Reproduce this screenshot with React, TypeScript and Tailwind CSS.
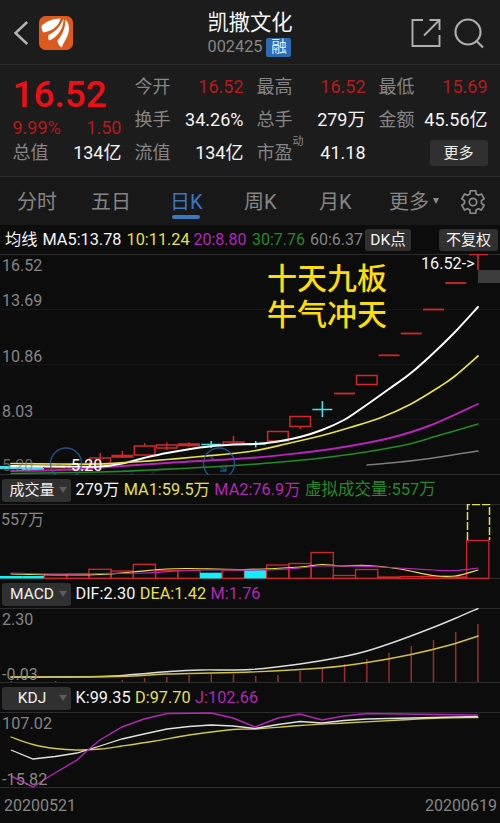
import * as React from "react";

const STEP = 22.22;
const cx = (i: number) => 11.3 + STEP * i;

const RED = "#d3262b";
const CYAN = "#3fe3e8";
const YELLOW = "#e6e04c";
const MAGENTA = "#b526b8";
const GREEN = "#238a26";

type Point = [number, number];

// Catmull-Rom smoothing so the averages bend the way the chart draws them
const smooth = (pts: Point[]) => {
  let d = `M${pts[0][0]} ${pts[0][1]}`;
  for (let i = 0; i < pts.length - 1; i++) {
    const a = pts[i - 1] || pts[i];
    const b = pts[i];
    const c = pts[i + 1];
    const e = pts[i + 2] || c;
    d += ` C${b[0] + (c[0] - a[0]) / 6} ${b[1] + (c[1] - a[1]) / 6} ${c[0] - (e[0] - b[0]) / 6} ${c[1] - (e[1] - b[1]) / 6} ${c[0]} ${c[1]}`;
  }
  return d;
};

const polar = (r: number, deg: number) => {
  const t = (deg * Math.PI) / 180;
  return `${(13 + r * Math.cos(t)).toFixed(2)} ${(13 + r * Math.sin(t)).toFixed(2)}`;
};

// six teeth, one of them pointing straight up
const gear = `M${[0, 1, 2, 3, 4, 5]
  .map((k) => {
    const a = k * 60 - 90;
    return [polar(8.6, a - 21), polar(11.6, a - 14), polar(11.6, a + 14), polar(8.6, a + 21)].join(" ");
  })
  .join(" ")}Z`;

const Curve: React.FC<{ pts: Point[]; color: string; width?: number }> = ({ pts, color, width = 1.6 }) => (
  <path d={smooth(pts)} fill="none" stroke={color} strokeWidth={width} strokeLinecap="round" />
);

// index, body top, body bottom, wick top, wick bottom
const candles: [number, number, number, number, number][] = [
  [4, 458, 463.5, 453, 463],
  [5, 455.5, 457, 451, 458],
  [6, 446, 455, 443, 446],
  [7, 445, 448, 442.5, 450],
  [8, 444, 445.5, 442, 447],
  [10, 442, 444.5, 436, 442],
  [12, 431.5, 441, 441, 441],
  [13, 416.5, 426.5, 426, 429],
  [15, 393.5, 393.5, 393, 393],
  [16, 375.5, 384.5, 384, 384],
  [17, 355.3, 355.3, 355, 355],
  [18, 333.5, 333.5, 333, 333],
  [19, 309.5, 309.5, 309, 309],
  [20, 283, 283, 283, 283],
];

const crosses: [number, number, number, number][] = [
  [9, 444.5, 441, 448],
  [11, 444, 441, 447.5],
  [14, 409.5, 401, 417],
];

const volumes = [576, 576, 574.5, 574, 569.3, 571, 564.3, 570.5, 570.5, 572.7, 570, 570, 565, 563.5, 552.5, 575.5, 569.5, 577, 576.5, 576.5, 577, 540.5];
const fallingDays = [0, 1, 9, 11];

const macdBars = [681, 682, 681, 682, 682, 680, 678, 677, 675, 674, 674, 676, 675, 671, 668.5, 664, 659, 653, 646, 640, 632, 624];

const quotes = [
  { label: "今开", value: "16.52", up: true },
  { label: "最高", value: "16.52", up: true },
  { label: "最低", value: "15.69", up: true },
  { label: "换手", value: "34.26%" },
  { label: "总手", value: "279万" },
  { label: "金额", value: "45.56亿" },
];

const Quote: React.FC<{ label: string; value: string; up?: boolean }> = ({ label, value, up }) => (
  <div className="flex items-center justify-between">
    <span className="text-[#858585]">{label}</span>
    <span className={up ? "text-[#b81a1d]" : "text-[#f4f4f4]"}>{value}</span>
  </div>
);

const Picker: React.FC<{ children: React.ReactNode }> = ({ children }) => (
  <div className="flex h-[23px] w-[69px] shrink-0 items-center rounded-[3px] bg-[#303030] text-[#f0f0f0]">
    <span className="flex-1 pl-[3px] text-center">{children}</span>
    <span className="mr-[4px] h-0 w-0 border-x-[4px] border-t-[6px] border-x-transparent border-t-[#5c5c5c]" />
  </div>
);

const Header: React.FC = () => (
  <header className="flex h-[65px] items-center border-b border-[#2d2d2d] pl-[13px] pr-[15px]">
    <svg width="17" height="26" viewBox="0 0 17 26" className="mt-[1px]">
      <path d="M14.2 2 2.5 13 14.2 24" fill="none" stroke="#b4b4b4" strokeWidth="2.5" />
    </svg>
    <svg width="34" height="34" viewBox="0 0 34 34" className="ml-[9px] mt-[2px]">
      <rect width="34" height="34" rx="6.5" fill="#dc5a1d" />
      <path d="M21.5 2.5C14 2.5 6 6 2.5 10C2.5 13 3 15 4.5 16.5C10 15.5 15 13 18 9.500C20 7 21 5 21.5 2.5Z" fill="#fff" />
      <path d="M24.5 2.5C22 10 16 16 9.5 19C9 21 9.3 23 10 24.5C15 23 20 18 22.5 12.5C24 9 24.7 6 24.5 2.5Z" fill="#fff" />
      <path d="M26.5 3.5C26.5 12 23 20 18.5 24.5C18.5 27 20 30 23 31.5C23.5 28 27 24 28.8 19C31 13 30 7 26.5 3.5Z" fill="#fff" />
    </svg>
    <div className="flex flex-1 flex-col items-center">
      <div className="ml-[16px] mt-[1px] text-[21.3px] leading-[29px] text-[#f6f6f6]">凯撒文化</div>
      <div className="ml-[15px] flex items-center gap-[4px] text-[16.3px] leading-[20px] text-[#858585]">
        002425
        <span className="h-[19px] w-[25px] rounded-[2px] bg-[#2d6cb5] text-center text-[15.5px] leading-[19px] text-[#e4eefa]">融</span>
      </div>
    </div>
    <svg width="30" height="30" viewBox="0 0 30 30" fill="none" stroke="#b0b0b0" strokeWidth="1.9" className="mt-[2px]">
      <path d="M12 2H1.5V28H28.5V17M18.5 2H28.5V12M28.5 2 13 17.5" />
    </svg>
    <svg width="31" height="31" viewBox="0 0 31 31" fill="none" stroke="#b0b0b0" strokeWidth="2.1" className="ml-[13px] mt-[3px]">
      <circle cx="14" cy="14" r="12.5" />
      <path d="m22.500 23 6.500 6.500" />
    </svg>
  </header>
);

const Summary: React.FC = () => (
  <section className="grid h-[112px] grid-cols-4 gap-x-[13px] border-b border-[#2d2d2d] px-[12.5px] pt-[5px] text-[18px]">
    <div className="flex flex-col">
      <div className="h-[49px] text-[37px] font-medium leading-[50px] text-[#ee0f16]">16.52</div>
      <div className="flex h-[17px] items-center justify-between text-[#b81a1d]">
        <span>9.99%</span>
        <span>1.50</span>
      </div>
      <div className="flex h-[33px] items-center justify-between">
        <span className="text-[#858585]">总值</span>
        <span className="text-[#f4f4f4]">134亿</span>
      </div>
    </div>
    <div className="col-span-3 grid h-[99px] grid-cols-3 grid-rows-3 gap-x-[13px]">
      {quotes.map((q) => (
        <Quote key={q.label} {...q} />
      ))}
      <Quote label="流值" value="134亿" />
      <div className="flex items-center justify-between">
        <span className="relative text-[#858585]">
          市盈
          <span className="absolute left-[36px] top-[-9px] text-[11px] leading-[24px]">动</span>
        </span>
        <span className="text-[#f4f4f4]">41.18</span>
      </div>
      <div className="flex items-center justify-end">
        <div className="h-[26px] w-[58px] rounded-[3px] bg-[#303030] text-center text-[15px] leading-[26px] text-[#ededed]">更多</div>
      </div>
    </div>
  </section>
);

const Tabs: React.FC = () => (
  <nav className="flex h-[48px] items-center bg-[#181818] pl-[17px] pt-[1px] text-[20px] text-[#858585]">
    <span className="w-[74px]">分时</span>
    <span className="w-[79px]">五日</span>
    <span className="relative w-[74px] text-[#3d77c2]">
      日K
      <span className="absolute bottom-[-2px] left-[2px] h-[4px] w-[28px] rounded-full bg-[#3d77c2]" />
    </span>
    <span className="w-[75px]">周K</span>
    <span className="w-[70px]">月K</span>
    <span>更多</span>
    <span className="mb-[2px] ml-[4px] h-0 w-0 border-x-[3.5px] border-t-[6px] border-x-transparent border-t-[#8a8a8a]" />
    <svg width="26" height="26" viewBox="0 0 26 26" fill="none" stroke="#8b8b8b" strokeWidth="1.700" strokeLinejoin="round" className="ml-[21px]">
      <path d={gear} />
      <circle cx="13" cy="13" r="3.700" />
    </svg>
  </nav>
);

const Grid: React.FC<{ ys: number[]; color?: string }> = ({ ys, color = "#2c2c2c" }) => (
  <>
    {ys.map((y) => (
      <path key={y} d={`M0 ${y}H500`} stroke={color} />
    ))}
  </>
);

const PriceChart: React.FC = () => (
  <div className="relative h-[221px] text-[16px] leading-[18px] text-[#858585]">
    <svg width="500" height="221" viewBox="0 254 500 221" className="block">
      <Grid ys={[254.5, 474.5]} />
      <Grid ys={[309.5, 364.5, 419.5]} color="#171717" />
      <path d="M0 467.5H43M22 469.5H44" stroke={CYAN} strokeWidth="3" />
      <path d="M44 467.5H66M67 469.5H88" stroke={RED} strokeWidth="2" />
      {candles.map(([i, top, bottom, high, low]) => (
        <g key={i} stroke={RED} strokeWidth="1.5" fill="none">
          {bottom - top < 1 ? (
            <path d={`M${cx(i) - 10.5} ${top}h21`} strokeWidth="1.8" />
          ) : (
            <rect x={cx(i) - 10.3} y={top} width="20.6" height={bottom - top} />
          )}
          {low > high && <path d={`M${cx(i)} ${high}V${low}`} />}
        </g>
      ))}
      {crosses.map(([i, y, high, low]) => (
        <path key={i} d={`M${cx(i) - 10} ${y}h20M${cx(i)} ${high}V${low}`} stroke={CYAN} strokeWidth="1.6" />
      ))}
      <path d="M469 254.5H488M478 254V270" stroke={RED} strokeWidth="1.6" />
      <rect x="478" y="270" width="22" height="13" fill="#3c3c3c" />
      <Curve pts={[[11, 473.5], [100, 472], [150, 470], [250, 464.5], [330, 457], [400, 446], [440, 435], [478, 424]]} color={GREEN} />
      <Curve pts={[[11, 471], [60, 470], [100, 467.5], [167, 463], [250, 458], [300, 453], [344, 447], [390, 438], [430, 425.5], [478, 404]]} color={MAGENTA} width={1.9} />
      <Curve pts={[[11, 466], [60, 466.5], [100, 466.5], [122, 463.5], [144, 458], [167, 453], [200, 447.5], [233, 444.5], [255, 444], [278, 441.5], [300, 437], [322, 430], [344, 420], [360, 409.5], [389, 389], [411, 373], [433, 353.5], [455, 332], [478, 307]]} color="#fff" width={1.9} />
      <Curve pts={[[11, 463.5], [60, 464], [100, 464], [133, 462], [167, 459.5], [200, 456.5], [250, 451.5], [290, 443], [322, 435.5], [350, 427.5], [380, 418], [411, 404], [440, 386.5], [455, 376], [478, 356]]} color={YELLOW} width={1.7} />
      <Curve pts={[[367, 465], [400, 462], [430, 458.5], [478, 451]]} color="#7d7d7d" />
      <g fill="none" stroke="#2563a0" strokeOpacity="0.8" strokeWidth="1.4">
        <circle cx="66" cy="463.5" r="15.5" />
        <circle cx="219" cy="463.5" r="15.5" />
        <path d="M211 457l3 3M219 466l7 5M226 465v6h-6" />
        <path d="M129 470a15 15 0 0 0 26 0" strokeOpacity="0.35" />
      </g>
      <path d="M61 466.5h4M67 466.5h4" stroke="#fff" strokeWidth="1.5" />
    </svg>
    <span className="absolute left-[2px] top-[3px]">16.52</span>
    <span className="absolute left-[2px] top-[38px]">13.69</span>
    <span className="absolute left-[2px] top-[94px]">10.86</span>
    <span className="absolute left-[2px] top-[149px]">8.03</span>
    <span className="absolute left-[2px] top-[203px] opacity-70">5.20</span>
    <span className="absolute left-[71px] top-[203px] text-white">5.20</span>
    <span className="absolute left-[421px] top-[1px] whitespace-nowrap text-[16.2px] text-[#f4f4f4]">16.52-&gt;</span>
    <div className="absolute left-[267px] top-[7px] whitespace-nowrap text-[30px] font-medium leading-[36px] text-[#fbdd0d]">
      十天九板
      <br />
      牛气冲天
    </div>
  </div>
);

const VolumeChart: React.FC = () => (
  <div className="relative h-[75px] text-[16px] leading-[18px] text-[#858585]">
    <svg width="500" height="75" viewBox="0 504 500 75" className="block">
      <Grid ys={[504.5, 578.5]} />
      {volumes.map((y, i) =>
        fallingDays.includes(i) ? (
          <rect key={i} x={STEP * i} y={y} width={STEP} height={578.5 - y} fill="#14eef5" />
        ) : (
          <rect key={i} x={STEP * i} y={y} width={STEP} height={578.3 - y} fill="none" stroke={RED} strokeWidth="1.3" />
        )
      )}
      <path d="M467.5 540V504.5H489.5V540" fill="none" stroke={YELLOW} strokeWidth="1.5" strokeDasharray="8 2" />
      <Curve pts={[[11, 574], [66, 575], [100, 574.5], [133, 572], [166, 569], [189, 568.5], [244, 569.5], [300, 567], [322, 564.5], [340, 566], [367, 565.5], [400, 569], [433, 575.5], [455, 576], [478, 570]]} color={YELLOW} width={1.2} />
      <Curve pts={[[11, 573], [60, 574], [100, 573.5], [144, 573], [200, 570], [260, 570], [300, 568], [322, 566], [380, 567], [433, 570], [455, 570.5], [478, 568]]} color={MAGENTA} width={1.2} />
    </svg>
    <span className="absolute left-[1px] top-[7px]">557万</span>
  </div>
);

const MacdChart: React.FC = () => (
  <div className="relative h-[75px] text-[16px] leading-[18px] text-[#858585]">
    <svg width="500" height="75" viewBox="0 608 500 75" className="block">
      <Grid ys={[608.5, 682.5]} />
      {macdBars.map((y, i) => (
        <path key={i} d={`M${cx(i)} ${y}V682`} stroke="#9c2d26" strokeWidth="1.5" />
      ))}
      <Curve pts={[[11, 677], [100, 676.5], [133, 674.5], [166, 671.8], [200, 670], [250, 669.5], [300, 664], [344, 656.5], [367, 651], [400, 640], [433, 627.5], [455, 618.5], [478, 608.5]]} color="#dedede" width={1.4} />
      <Curve pts={[[11, 677], [120, 676.5], [166, 674], [250, 672], [322, 668], [367, 662.5], [411, 654.5], [450, 645], [478, 636]]} color="#cfc244" width={1.4} />
    </svg>
    <span className="absolute left-[2px] top-[3px]">2.30</span>
    <span className="absolute left-[2px] top-[58px]">-0.03</span>
  </div>
);

const KdjChart: React.FC = () => (
  <div className="relative h-[76px] text-[16px] leading-[18px] text-[#858585]">
    <svg width="500" height="76" viewBox="0 712 500 76" className="block">
      <Grid ys={[712.5, 787.5]} />
      <Curve pts={[[11, 737], [33, 744.5], [55, 748.5], [77, 750], [100, 749], [122, 746], [155, 741], [189, 735], [233, 729.5], [255, 729], [300, 725.5], [344, 723], [400, 720], [440, 718], [478, 717.5]]} color="#cdc848" width={1.3} />
      <path d="M11 750 33 759 55 756.5 77 753 100 746 122 739 144 734 167 729 189 726.5 211 725 233 726 255 728.5 278 724.5 300 721.5 322 723 344 720.5 367 719 411 718 478 716.5" fill="none" stroke="#e2e2e2" strokeWidth="1.3" />
      <path d="M11 776 33 787 50 776 77 760 88 750 100 740 122 727 144 719 167 713.5 211 713 233 718 255 727 278 718 300 714 322 720 344 716 367 713.5 478 715" fill="none" stroke={MAGENTA} strokeWidth="1.4" />
    </svg>
    <span className="absolute left-[2px] top-[3px] text-[16.3px]">107.02</span>
    <span className="absolute left-[2px] top-[59px] text-[16.3px]">-15.82</span>
  </div>
);

const App: React.FC = () => {
  return (
    <div className="h-[823px] w-[500px] overflow-hidden whitespace-nowrap bg-[#1c1c1c] font-['Roboto','Noto_Sans_CJK_SC',sans-serif]">
      <Header />
      <Summary />
      <Tabs />
      <main className="bg-[#0c0c0c] text-[16.3px] leading-[22px]">
        <div className="flex h-[29px] items-center pl-[5px] pt-[1px]">
          <span className="w-[37.5px] text-[#f4f4f4]">均线</span>
          <span className="w-[84px] text-[#f4f4f4]">MA5:13.78</span>
          <span className="w-[67px] text-[#e6e04c]">10:11.24</span>
          <span className="w-[58.5px] text-[16px] text-[#b526b8]">20:8.80</span>
          <span className="w-[58px] text-[16px] text-[#238a26]">30:7.76</span>
          <span className="w-[55px] text-[16px] text-[#858585]">60:6.37</span>
          <span className="h-[22px] w-[46px] rounded-[3px] bg-[#303030] text-center text-[15.5px] text-[#f4f4f4]">DK点</span>
          <span className="ml-auto mr-[2px] h-[22px] w-[59px] rounded-[3px] bg-[#303030] text-center text-[15px] text-[#f4f4f4]">不复权</span>
        </div>
        <PriceChart />
        <div className="flex h-[29px] items-center gap-[4.5px] pl-[2px] pt-[1px]">
          <Picker>
            <span className="text-[15px]">成交量</span>
          </Picker>
          <span className="text-[#f4f4f4]">279万</span>
          <span className="text-[#e6e04c]">MA1:59.5万</span>
          <span className="text-[#b526b8]">MA2:76.9万</span>
          <span className="text-[16.5px] text-[#238a26]">虚拟成交量:557万</span>
        </div>
        <VolumeChart />
        <div className="flex h-[29px] items-center gap-[4.5px] pl-[2px] pt-[1px]">
          <Picker>
            <span className="text-[15.5px]">MACD</span>
          </Picker>
          <span className="text-[#f4f4f4]">DIF:2.30</span>
          <span className="text-[#e6e04c]">DEA:1.42</span>
          <span className="text-[#b526b8]">M:1.76</span>
        </div>
        <MacdChart />
        <div className="flex h-[29px] items-center gap-[4.5px] pl-[2px] pt-[1px]">
          <Picker>
            <span className="text-[15.5px]">KDJ</span>
          </Picker>
          <span className="text-[#f4f4f4]">K:99.35</span>
          <span className="text-[#e6e04c]">D:97.70</span>
          <span className="text-[#b526b8]">J:102.66</span>
        </div>
        <KdjChart />
        <div className="flex h-[35px] items-center justify-between pl-[4px] pr-[3px] text-[16px] text-[#858585]">
          <span>20200521</span>
          <span>20200619</span>
        </div>
      </main>
    </div>
  );
};

export default App;
